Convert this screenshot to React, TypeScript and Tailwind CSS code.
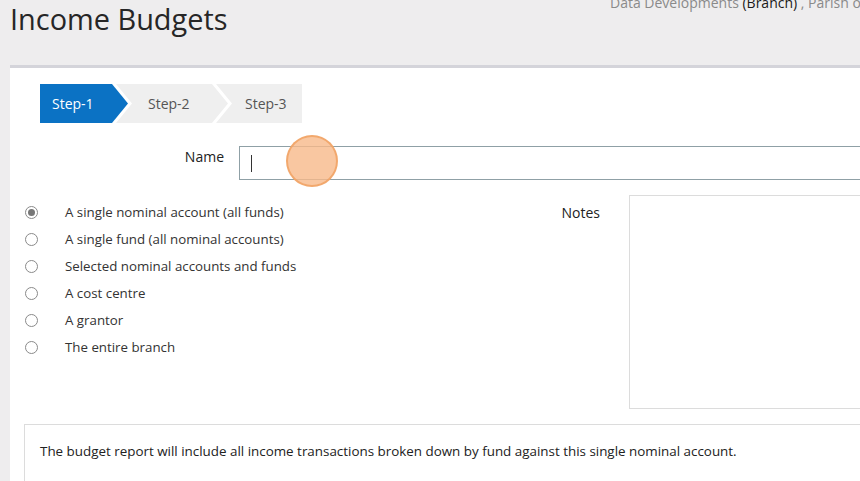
import React from "react";

const options = [
  "A single nominal account (all funds)",
  "A single fund (all nominal accounts)",
  "Selected nominal accounts and funds",
  "A cost centre",
  "A grantor",
  "The entire branch",
];

export default function App() {
  return (
    <div
      className="w-[860px] h-[481px] overflow-hidden bg-[#eeedee] text-[#333]"
      style={{ fontFamily: '"Open Sans", "Liberation Sans", sans-serif' }}
    >
      <div className="flex h-[65px] pl-[10px] w-[1100px]">
        <h1 className="shrink-0 w-[217px] mt-[0px] text-[28.9px] leading-[38px] text-[#262626] whitespace-nowrap">Income Budgets</h1>
        <div className="ml-[383px] -mt-[7px] text-[14px] leading-[20px] text-[#8a8a8a] whitespace-nowrap">
          Data Developments <span className="text-[#1a1a1a]">(Branch)</span> , Parish of Example
        </div>
      </div>
      <div className="ml-[10px] border-t-[3px] border-[#d4d4da] bg-white h-[420px] pt-[16px] w-[1000px]">
        <div className="flex ml-[30px] h-[39px] text-[14px]">
          <div
            className="w-[88px] h-[39px] bg-[#0b72c4] text-white flex items-center pl-[12px]"
            style={{ clipPath: "polygon(0 0, 72px 0, 88px 50%, 72px 100%, 0 100%)" }}
          >
            Step-1
          </div>
          <div
            className="-ml-[12px] w-[112px] h-[39px] bg-[#efefef] text-[#555] flex items-center pl-[32px]"
            style={{ clipPath: "polygon(0 0, 96px 0, 112px 50%, 96px 100%, 0 100%, 16px 50%)" }}
          >
            Step-2
          </div>
          <div
            className="-ml-[12px] w-[86px] h-[39px] bg-[#efefef] text-[#555] flex items-center pl-[29px]"
            style={{ clipPath: "polygon(0 0, 100% 0, 100% 100%, 0 100%, 16px 50%)" }}
          >
            Step-3
          </div>
        </div>
        <div className="flex items-center mt-[23px]">
          <div className="shrink-0 w-[214px] text-right text-[14px] text-[#222] -mt-[14px]">Name</div>
          <div className="shrink-0 relative ml-[15px] w-[700px] h-[34px] border border-[#8fa0a6] flex items-center pl-[11px]">
            <div className="w-[1px] h-[17px] bg-[#333]" />
            <div className="absolute left-[46px] top-[-12px] w-[52px] h-[52px] rounded-full bg-[#f8b98a]/80 border-2 border-[#f0a060]/80" />
          </div>
        </div>
        <div className="flex mt-[15px]">
          <div className="shrink-0 w-[360px] pt-[4px]">
            {options.map((o, i) => (
              <div key={o} className="flex items-center h-[27px]">
                <div className="ml-[15px] w-[13px] h-[13px] rounded-full border border-[#8a8a8a] bg-white flex items-center justify-center">
                  {i === 0 && <div className="w-[7px] h-[7px] rounded-full bg-[#777]" />}
                </div>
                <div className="ml-[27px] text-[13.3px] text-[#333] whitespace-nowrap">{o}</div>
              </div>
            ))}
          </div>
          <div className="shrink-0 w-[230px] text-right text-[14px] text-[#222] pt-[7px]">Notes</div>
          <div className="shrink-0 ml-[29px] w-[400px] h-[214px] border border-[#dcdcdc]" />
        </div>
        <div className="mt-[15px] ml-[14px] w-[900px] border border-[#dcdcdc] h-[80px] pl-[15px] pt-[16px] text-[13.4px] leading-[20px] text-[#222] whitespace-nowrap">
          The budget report will include all income transactions broken down by fund against this single nominal account.
        </div>
      </div>
    </div>
  );
}
